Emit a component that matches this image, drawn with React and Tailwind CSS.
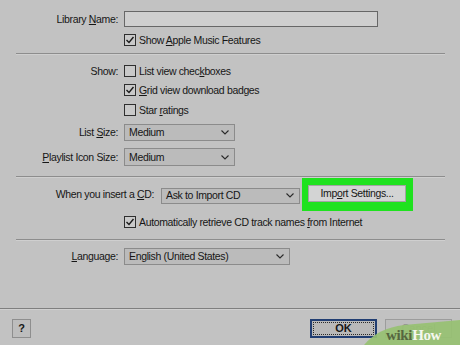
import React from "react";

const U = ({ children }) => <span className="underline underline-offset-[1px] decoration-[1px]">{children}</span>;

function Check({ checked }) {
  return (
    <div className="w-[12px] h-[12px] border border-[#2e2e2e] bg-[#c9c9c9] flex items-center justify-center shrink-0">
      {checked && (
        <svg width="10" height="10" viewBox="0 0 10 10">
          <path d="M1.5 5 L4 7.5 L8.5 2" stroke="#1a1a1a" strokeWidth="1.4" fill="none" />
        </svg>
      )}
    </div>
  );
}

function Chevron() {
  return (
    <svg width="8" height="5" viewBox="0 0 8 5" className="shrink-0">
      <path d="M0.5 0.5 L4 4 L7.5 0.5" stroke="#2a2a2a" strokeWidth="1.1" fill="none" />
    </svg>
  );
}

function Select({ w, h, children }) {
  return (
    <div className={`${w} ${h} bg-[#bbbbbb] border border-[#8b8b8b] flex items-center justify-between pl-[4px] pr-[5px]`}>
      <span>{children}</span>
      <Chevron />
    </div>
  );
}

function CheckRow({ checked, mt, children }) {
  return (
    <div className={`flex items-center h-[16px] ${mt}`}>
      <div className="w-[124px] shrink-0" />
      <Check checked={checked} />
      <span className="ml-[3px]">{children}</span>
    </div>
  );
}

function Sep({ mt }) {
  return <div className={`${mt} ml-[16px] w-[429px] h-px bg-[#8d8d8d] shadow-[0_1px_0_#cfcfcf]`} />;
}

export default function App() {
  return (
    <div className="relative w-[460px] h-[345px] overflow-hidden bg-[#c2c2c2] text-[#161616] text-[10.5px] tracking-[-0.35px] font-['Liberation_Sans',Arial,sans-serif] leading-none">
      <div className="flex flex-col pt-[11px]">
        <div className="flex items-center h-[16px]">
          <div className="w-[118px] text-right shrink-0">Library <U>N</U>ame:</div>
          <div className="ml-[6px] w-[254px] h-[16px] bg-[#cfcfcf] border border-[#676767]" />
        </div>
        <CheckRow checked mt="mt-[5px]">Show <U>A</U>pple Music Features</CheckRow>

        <Sep mt="mt-[5px]" />

        <div className="flex items-center h-[16px] mt-[9px]">
          <div className="w-[118px] text-right shrink-0">Show:</div>
          <div className="ml-[6px]"><Check /></div>
          <span className="ml-[3px]">List view chec<U>k</U>boxes</span>
        </div>
        <CheckRow checked mt="mt-[3px]"><U>G</U>rid view download badges</CheckRow>
        <CheckRow mt="mt-[4px]">Star <U>r</U>atings</CheckRow>

        <div className="flex items-center mt-[6px]">
          <div className="w-[118px] text-right shrink-0">List <U>S</U>ize:</div>
          <div className="ml-[6px]"><Select w="w-[111px]" h="h-[17px]">Medium</Select></div>
        </div>
        <div className="flex items-center mt-[7px]">
          <div className="w-[118px] text-right shrink-0"><U>P</U>laylist Icon Size:</div>
          <div className="ml-[6px]"><Select w="w-[111px]" h="h-[18px]">Medium</Select></div>
        </div>

        <Sep mt="mt-[10px]" />

        <div className="flex items-center h-[33px] mt-[1px]">
          <div className="w-[154px] text-right shrink-0">When you insert a <U>C</U>D:</div>
          <div className="ml-[7px] mt-[2px]"><Select w="w-[139px]" h="h-[16px]">Ask to Import CD</Select></div>
          <div className="ml-[2px] w-[111px] h-[33px] bg-[#1fe21f] flex items-center pl-[6px]">
            <div className="w-[98px] h-[17px] bg-[#d3d4d4] border border-[#a3a3a3] flex items-center justify-center -mt-[2px]">
              Imp<U>o</U>rt Settings...
            </div>
          </div>
        </div>
        <CheckRow checked mt="mt-[3px]">Automatically retrieve CD track names <U>f</U>rom Internet</CheckRow>

        <Sep mt="mt-[9px]" />

        <div className="flex items-center mt-[8px]">
          <div className="w-[118px] text-right shrink-0"><U>L</U>anguage:</div>
          <div className="ml-[6px]"><Select w="w-[166px]" h="h-[17px]">English (United States)</Select></div>
        </div>

        <div className="mt-[43px] w-full h-px bg-[#7f7f7f] shadow-[0_1px_0_#d0d0d0]" />

        <div className="flex items-center h-[19px] mt-[10px]">
          <div className="ml-[12px] w-[19px] h-[19px] bg-[#bdbdbd] border border-[#8e8e8e] flex items-center justify-center font-bold text-[11px] tracking-normal">?</div>
          <div className="ml-auto w-[67px] h-[19px] border-2 border-[#213e72] bg-[#b9b9b9] p-px">
            <div className="w-full h-full border border-dotted border-[#2a2a2a] flex items-center justify-center text-[11px] font-bold tracking-normal">OK</div>
          </div>
          <div className="ml-[8px] mr-[8px] w-[67px] h-[19px] border border-[#9c9c9c] bg-[#bdbdbd] flex items-center justify-center text-[#8f8f8f] text-[11px] tracking-normal">Cancel</div>
        </div>
      </div>

      <svg className="absolute left-0 top-0" width="460" height="345" viewBox="0 0 460 345">
        <path d="M364 345 Q378 328 404 325 L460 320 L460 345 Z" fill="#97c172" fillOpacity="0.92" />
        <text x="386" y="340" fontFamily="'Liberation Serif', serif" fontWeight="bold" fontSize="15" fill="#56663f">wiki<tspan fill="#f4f7ee">How</tspan></text>
      </svg>
    </div>
  );
}
